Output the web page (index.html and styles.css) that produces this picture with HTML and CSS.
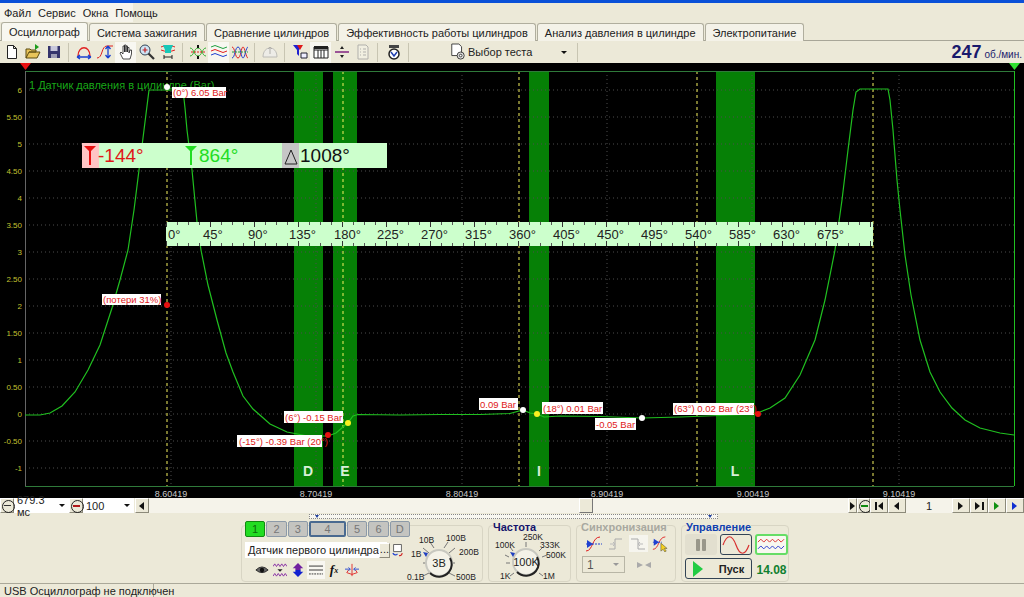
FILE: index.html
```html
<!DOCTYPE html>
<html lang="ru">

<head>
  <meta charset="UTF-8" />
  <title>Осциллограф</title>
  <link rel="stylesheet" href="styles.css">
</head>

<body>
  <div class="titlebar"></div>

  <div class="menubar">
    <ul class="menu">
      <li>Файл</li>
      <li>Сервис</li>
      <li>Окна</li>
      <li>Помощь</li>
    </ul>
  </div>

  <ul class="tabs">
    <li class="tab active">Осциллограф</li>
    <li class="tab">Система зажигания</li>
    <li class="tab">Сравнение цилиндров</li>
    <li class="tab">Эффективность работы цилиндров</li>
    <li class="tab">Анализ давления в цилиндре</li>
    <li class="tab">Электропитание</li>
  </ul>

  <div class="toolbar">
    <span class="tool"><svg viewBox="0 0 16 16"><path d="M3.500 1.500h6l3 3v10h-9z M9.500 1.500v3h3" fill="#fff" stroke="#222"/></svg></span>
    <span class="tool"><svg viewBox="0 0 16 16"><path d="M1 14V5h4l1 1h5v2H4L1 14h11l3-6H4" fill="#e8c45a" stroke="#5a4a10"/><path d="M10 0v6l4-3z" fill="#1c9c1c"/></svg></span>
    <span class="tool"><svg viewBox="0 0 16 16"><path d="M2 2h12v12H2z" fill="#34346c"/><path d="M4.500 2h7v5h-7z" fill="#c8c8dc"/><path d="M5 10h6v4H5z" fill="#9c9cb4"/></svg></span>
    <i class="sep"></i>
    <span class="tool"><svg viewBox="0 0 16 16"><path d="M2 12C2 1 14 1 14 12" fill="none" stroke="#e02020" stroke-width="1.300"/><path d="M1 13h14M1 13l3-2M1 13l3 2M15 13l-3-2M15 13l-3 2" fill="none" stroke="#1840d0" stroke-width="1.300"/></svg></span>
    <span class="tool"><svg viewBox="0 0 16 16"><path d="M0 14C6 14 4 2 10 2h6" fill="none" stroke="#e02020"/><path d="M11 2v12M11 2L8.500 5M11 2l2.500 3M11 14l-2.500-3M11 14l2.500-3" fill="none" stroke="#1840d0" stroke-width="1.300"/></svg></span>
    <span class="tool pressed"><svg viewBox="0 0 16 16"><path d="M5 15L2 9l1-1 2 2V2h1.500v6V1H8v7V2h1.500v6V3.500H11V9l1-3h1.500v4L12 15z" fill="#fff" stroke="#222" stroke-width=".8"/></svg></span>
    <span class="tool"><svg viewBox="0 0 16 16"><circle cx="6" cy="6" r="5" fill="#cfe4f4" stroke="#345"/><path d="M6 3.500v5M3.500 6h5" stroke="#c02020" stroke-width="1.200"/><path d="M9.500 9.500L15 15" stroke="#333" stroke-width="2.200"/></svg></span>
    <span class="tool"><svg viewBox="0 0 16 16"><path d="M1 3c5-2 9-2 14 0M1 6c5 2 9 2 14 0" fill="none" stroke="#e02020"/><path d="M3 1h10l-2 5v3H5V6z" fill="#18c8b8"/><path d="M4 11v4M12 11v4M4 13h8" stroke="#222"/></svg></span>
    <i class="sep"></i>
    <span class="tool"><svg viewBox="0 0 16 16"><path d="M0 4c4 0 4 8 8 8s4-8 8-8M0 12c4 0 4-8 8-8s4 8 8 8" fill="none" stroke="#30b030"/><path d="M8 1v3M8 12v3" stroke="#111" stroke-width="2"/><path d="M1 8h14" stroke="#e02020" stroke-dasharray="2 1"/></svg></span>
    <span class="tool pressed"><svg viewBox="0 0 16 16"><path d="M0 3q4-3 8 0t8 0" fill="none" stroke="#20a040"/><path d="M0 7q4-3 8 0t8 0" fill="none" stroke="#e02020"/><path d="M0 11q4-3 8 0t8 0" fill="none" stroke="#2040d0"/></svg></span>
    <span class="tool"><svg viewBox="0 0 16 16"><path d="M0 3c3 0 3 11 6 11s3-11 5-11 3 11 5 11" fill="none" stroke="#e02020"/><path d="M0 14c3 0 3-11 6-11s3 11 5 11 3-11 5-11" fill="none" stroke="#2040d0"/><path d="M0 8h16" stroke="#20a040" stroke-dasharray="2 1"/></svg></span>
    <i class="sep"></i>
    <span class="tool off"><svg viewBox="0 0 16 16"><path d="M1 13C1 1 15 1 15 13z" fill="#eee" stroke="#aaa"/><path d="M8 3v7M6 5l2-2 2 2" fill="none" stroke="#999"/></svg></span>
    <i class="sep"></i>
    <span class="tool"><svg viewBox="0 0 16 16"><path d="M1 1h9L7 6v6L5 10V6z" fill="#2020d0"/><path d="M5 1h6L8 6z" fill="#e01818"/><path d="M9 9h6v5H9z" fill="#eef" stroke="#223"/></svg></span>
    <span class="tool pressed"><svg viewBox="0 0 16 16"><path d="M1 3h14v11H1z M1 6h14M5 6v8M8 6v8M11 6v8" fill="#fff" stroke="#222"/><path d="M1 2h14v3H1z" fill="#222"/></svg></span>
    <span class="tool"><svg viewBox="0 0 16 16"><path d="M1 8h14" stroke="#802080" stroke-width="1.500"/><path d="M8 2l-2 3h4zM8 14l-2-3h4z" fill="#222"/></svg></span>
    <span class="tool off"><svg viewBox="0 0 16 16"><path d="M3 1h8l2 2v12H3z M5 5h1M8 5h3M5 8h1M8 8h3M5 11h1M8 11h3" fill="#f4f2e6" stroke="#999"/></svg></span>
    <i class="sep wide"></i>
    <span class="tool"><svg viewBox="0 0 16 16"><path d="M3 4h10v-3H3z" fill="#444"/><circle cx="8" cy="10" r="5" fill="#fff" stroke="#222" stroke-width="1.500"/><path d="M5 8l3 4 3-4" fill="none" stroke="#2040b0" stroke-width="1.500"/></svg></span>
    <i class="sep"></i>
    <div class="test-select">
      <svg viewBox="0 0 18 20"><path d="M2 1h8l3 3v10H2z" fill="#fff" stroke="#333"/><circle cx="12" cy="14" r="4" fill="#ddd" stroke="#333"/><circle cx="12" cy="14" r="1.500" fill="#fff" stroke="#333"/></svg>
      <span>Выбор теста</span>
      <b class="down"></b>
    </div>
    <i class="sep"></i>
    <div class="rpm"><b>247</b> об./мин.</div>
  </div>

  <svg class="plot" viewBox="0 63 1024 435">
    <path class="band" d="M294 71h29v415h-29z M333 71h24v415h-24z M529 71h20v415h-20z M716 71h39v415h-39z" />

    <path class="grid" d="M25 90H1014M25 117H1014M25 144H1014M25 171H1014M25 198H1014M25 225H1014M25 252H1014M25 279H1014M25 306H1014M25 333H1014M25 360H1014M25 387H1014M25 414H1014M25 441H1014M25 468H1014" />
    <path class="grid" d="M171 71V486M316 71V486M462 71V486M607 71V486M752 71V486M899 71V486" />
    <path class="cursor" d="M167 71V486M343 71V486M519 71V486M697 71V486M873 71V486" />

    <path class="frame" d="M25 71.500H1014M25 486.500H1014" />
    <path class="left-axis" d="M25.500 71V486" />
    <path class="right-axis" d="M1014.500 71V486" />
    <path class="marker-red" d="M20 63h11l-5.500 7z" />
    <path class="marker-green" d="M1009 63h11l-5.500 7z" />

    <g class="ylabels">
      <text x="22" y="93">6</text>
      <text x="22" y="120">5.50</text>
      <text x="22" y="147">5</text>
      <text x="22" y="174">4.50</text>
      <text x="22" y="201">4</text>
      <text x="22" y="228">3.50</text>
      <text x="22" y="255">3</text>
      <text x="22" y="282">2.50</text>
      <text x="22" y="309">2</text>
      <text x="22" y="336">1.50</text>
      <text x="22" y="363">1</text>
      <text x="22" y="390">0.50</text>
      <text x="22" y="417">0</text>
      <text x="22" y="444">-0.50</text>
      <text x="22" y="471">-1</text>
    </g>
    <g class="xlabels">
      <text x="171" y="497">8.60419</text>
      <text x="316" y="497">8.70419</text>
      <text x="462" y="497">8.80419</text>
      <text x="607" y="497">8.90419</text>
      <text x="753" y="497">9.00419</text>
      <text x="899" y="497">9.10419</text>
    </g>

    <text class="channel" x="29" y="89">1 Датчик давления в цилиндре (Bar)</text>

    <polyline class="curve" points="25,415 40,415 50,413 62,406 75,392 88,370 100,345 112,308 120,280 128,250 134,210 139,170 144,130 149,90 183,90 185,108 187,130 192,170 197,222 201,250 208,285 217,320 226,353 233,372 243,396 253,409 270,424 287,432 305,435.500 320,436 328,436 336,433 343,427 350,420 353,416 358,414.500 400,415 440,414.500 480,414.500 510,413.500 523,410 530,413 537,414 544,417 560,416 600,416.500 642,418 680,417 720,415.500 755,414 770,408 785,398 800,375 815,340 825,300 835,250 842,200 848,150 853,110 856,92 860,89 888,89 890,100 893,130 897,180 900,210 905,255 911,295 920,340 930,372 940,392 952,408 965,420 980,428 1000,433 1014,435" />

    <g class="letters">
      <text x="308" y="476">D</text>
      <text x="345" y="476">E</text>
      <text x="539" y="476">I</text>
      <text x="735" y="476">L</text>
    </g>

    <g class="info">
      <rect x="82" y="143" width="305" height="25" class="info-bg" />
      <rect x="82" y="143" width="17" height="25" class="info-red" />
      <rect x="282" y="143" width="17" height="25" class="info-grey" />
      <path class="marker-red" d="M84 146h12l-5 5v14h-2v-14z" />
      <path class="marker-bright" d="M185 146h12l-5 5v14h-2v-14z" />
      <path class="delta" d="M291 150l-6 14h12z" />
      <text class="big red" x="98" y="162">-144°</text>
      <text class="big bright" x="199" y="162">864°</text>
      <text class="big dark" x="300" y="162">1008°</text>
    </g>

    <g class="ruler">
      <rect x="166" y="222" width="707" height="24" class="info-bg" />
      <path class="minor" d="M166 223.500H873M166 244.500H873" />
      <path class="major" d="M166 224.500H873M166 243.500H873" />
      <text x="168" y="239">0°</text>
      <text x="203" y="239">45°</text>
      <text x="248" y="239">90°</text>
      <text x="289" y="239">135°</text>
      <text x="334" y="239">180°</text>
      <text x="377" y="239">225°</text>
      <text x="421" y="239">270°</text>
      <text x="465" y="239">315°</text>
      <text x="509" y="239">360°</text>
      <text x="553" y="239">405°</text>
      <text x="597" y="239">450°</text>
      <text x="641" y="239">495°</text>
      <text x="685" y="239">540°</text>
      <text x="729" y="239">585°</text>
      <text x="773" y="239">630°</text>
      <text x="817" y="239">675°</text>
    </g>

    <g class="tags">
      <rect x="172" y="87" width="54" height="11" />
      <text x="173" y="96">(0°) 6.05 Bar</text>
      <rect x="102" y="294" width="59" height="11" />
      <text x="103" y="303">(потери 31%)</text>
      <rect x="284" y="411" width="59" height="12" />
      <text x="285" y="421">(6°) -0.15 Bar</text>
      <rect x="237" y="435" width="85" height="12" />
      <text x="239" y="445">(-15°) -0.39 Bar (20°)</text>
      <rect x="479" y="398" width="39" height="12" />
      <text x="480" y="408">0.09 Bar</text>
      <rect x="542" y="402" width="61" height="12" />
      <text x="543" y="412">(18°) 0.01 Bar</text>
      <rect x="595" y="418" width="41" height="12" />
      <text x="596" y="428">-0.05 Bar</text>
      <rect x="673" y="403" width="81" height="12" />
      <text x="674" y="412">(63°) 0.02 Bar (23°)</text>
    </g>

    <circle class="dot white" cx="167" cy="87" r="3" />
    <circle class="dot red-dot" cx="167" cy="305" r="3" />
    <circle class="dot yellow" cx="348" cy="423" r="3" />
    <circle class="dot red-dot" cx="328" cy="435" r="3" />
    <circle class="dot white" cx="523" cy="410" r="3" />
    <circle class="dot yellow" cx="537" cy="414" r="3" />
    <circle class="dot white" cx="642" cy="418" r="3" />
    <circle class="dot red-dot" cx="758" cy="414" r="3" />
  </svg>

  <div class="navrow">
    <button class="nav-btn round minus"></button>
    <div class="field time">679.3 мс<b class="down"></b></div>
    <button class="nav-btn round plus"></button>
    <div class="field scale">100<b class="down"></b></div>
    <button class="nav-btn arrow-l"></button>
    <div class="track"><span class="thumb"></span></div>
    <button class="nav-btn small arrow-r"></button>
    <button class="nav-btn round plus green-plus"></button>
    <button class="nav-btn step first"></button>
    <button class="nav-btn step arrow-l"></button>
    <span class="page">1</span>
    <button class="nav-btn step arrow-r"></button>
    <button class="nav-btn step last"></button>
    <button class="nav-btn step arrow-r play-green"></button>
    <button class="nav-btn step arrow-r play-blue"></button>
  </div>

  <div class="splitter">
    <div class="split-bar"><b></b><b></b></div>
  </div>

  <div class="panels">
    <section class="panel channels">
      <div class="channel-col">
        <div class="chan-tabs">
          <span class="chan on">1</span>
          <span class="chan">2</span>
          <span class="chan">3</span>
          <span class="chan sel">4</span>
          <span class="chan">5</span>
          <span class="chan">6</span>
          <span class="chan">D</span>
        </div>
        <div class="sensor-row">
          <div class="sensor">Датчик первого цилиндра<span class="dots">...</span></div>
          <svg class="sensor-ico" viewBox="0 0 14 16"><path d="M2 1h10v9H2z" fill="#fff" stroke="#444"/><path d="M1 12q3 4 6 1" fill="none" stroke="#2040d0" stroke-width="1.500"/><path d="M13 12q-1 4-4 3" fill="none" stroke="#d02020" stroke-width="1.500"/></svg>
        </div>
        <div class="chan-tools">
          <span class="ctool"><svg viewBox="0 0 16 16"><path d="M1 8q7-7 14 0q-7 6-14 0" fill="#666" stroke="#222"/><circle cx="8" cy="8" r="2.500" fill="#111"/></svg></span>
          <span class="ctool"><svg viewBox="0 0 16 16"><path d="M0 4l2-3 2 3 2-3 2 3 2-3 2 3 2-3 2 3M0 15l2-3 2 3 2-3 2 3 2-3 2 3 2-3 2 3" fill="none" stroke="#8020a0"/><path d="M5 7h6l-3 3z" fill="#222"/></svg></span>
          <span class="ctool"><svg viewBox="0 0 16 16"><path d="M8 0l6 6h-3v2H5V6H2z" fill="#7020a0"/><path d="M8 16l6-6h-3V8H5v2H2z" fill="#1020d0"/></svg></span>
          <span class="ctool pressed"><svg viewBox="0 0 16 16"><path d="M0 3.500h16M0 8h16" stroke="#222"/><path d="M0 12.500h16" stroke="#222" stroke-dasharray="2 1"/></svg></span>
          <span class="ctool fx">f<small>x</small></span>
          <span class="ctool"><svg viewBox="0 0 16 16"><path d="M8 1v14" stroke="#e02020"/><path d="M8 13l-6-2 2-3M8 13l6-2-2-3" fill="none" stroke="#e02020"/><path d="M0 7h6M4 5l2 2-2 2M16 7h-6M12 5l-2 2 2 2" fill="none" stroke="#2040d0"/></svg></span>
        </div>
      </div>
      <svg class="knob" viewBox="410 525 73 57">
        <path class="knob-ticks" d="M433 552l-6-5M438 547l-4-6M448 547l4-6M453 552l6-5M454 562h5M453 572l6 3M433 572l-6 3M431 562h-4" />
        <circle class="knob-face" cx="443" cy="562" r="13" />
        <path class="knob-rim" d="M434 572a13 13 0 0 0 19-1 13 13 0 0 0 1-14" />
        <path class="knob-point" d="M432 552l-5-1 3 5z" />
        <text class="knob-value" x="443" y="566">3В</text>
        <text x="423" y="542">10В</text>
        <text x="450" y="540">100В</text>
        <text x="463" y="554">200В</text>
        <text x="415" y="556">1В</text>
        <text x="411" y="579">0.1В</text>
        <text x="460" y="579">500В</text>
      </svg>
    </section>

    <section class="panel freq">
      <h3 class="panel-title navy">Частота</h3>
      <svg class="knob" viewBox="489 525 80 57">
        <path class="knob-ticks" d="M513 550l-3-4M526 546v-5M539 550l4-4M542 556l5-2M514 572l-4 3M539 572l4 3M510 562h-4M509 556l-4-2" />
        <circle class="knob-face" cx="526" cy="561" r="13" />
        <path class="knob-rim" d="M517 571a13 13 0 0 0 19-1 13 13 0 0 0 1-14" />
        <path class="knob-point" d="M515 552l-5-1 3 5z" />
        <text class="knob-value" x="526" y="565">100K</text>
        <text x="523" y="539">250K</text>
        <text x="495" y="547">100K</text>
        <text x="540" y="547">333K</text>
        <text x="546" y="557">500K</text>
        <text x="500" y="578">1K</text>
        <text x="543" y="578">1M</text>
      </svg>
    </section>

    <section class="panel sync">
      <h3 class="panel-title grey">Синхронизация</h3>
      <div class="sync-icons">
        <span class="stool"><svg viewBox="0 0 18 16"><path d="M1 15c7 0 6-14 14-14" fill="none" stroke="#e02020"/><path d="M1 8h16" stroke="#2040d0" stroke-dasharray="2 1"/><path d="M2 4v8l6-4z" fill="#2040d0"/></svg></span>
        <span class="stool"><svg viewBox="0 0 18 16"><path d="M2 13h6V3h7" fill="none" stroke="#aaa"/><path d="M3 8h5M6 6l2 2-2 2" fill="none" stroke="#bbb"/></svg></span>
        <span class="stool pale"><svg viewBox="0 0 18 16"><path d="M2 3h7v10h7" fill="none" stroke="#aaa"/><path d="M9 8h5M11 6L9 8l2 2" fill="none" stroke="#bbb"/></svg></span>
        <span class="stool"><svg viewBox="0 0 18 18"><path d="M1 15C8 15 7 1 15 1" fill="none" stroke="#e02020"/><path d="M1 7h10" stroke="#2040d0" stroke-dasharray="2 1"/><path d="M2 3v8l6-4z" fill="#2040d0"/><path d="M10 8v9l2.500-2 2 3 1.500-1-2-3h3z" fill="#f4d020" stroke="#333" stroke-width=".5"/></svg></span>
      </div>
      <div class="sync-row">
        <div class="sync-select">1<b class="down pale-down"></b></div>
        <svg class="sync-arrows" viewBox="0 0 16 8"><path d="M1 1l6 3-6 3zM15 1L9 4l6 3z" fill="#aaa"/></svg>
      </div>
    </section>

    <section class="panel control">
      <h3 class="panel-title blue">Управление</h3>
      <div class="control-grid">
        <span class="cbtn pause"><i></i><i></i></span>
        <span class="cbtn dark"><svg viewBox="0 0 30 18"><path d="M2 9c4-11 9-11 13 0s9 11 13 0" fill="none" stroke="#d83030" stroke-width="1.200"/></svg></span>
        <span class="cbtn greenline"><svg viewBox="0 0 30 18"><path d="M1 6l3-3 3 3 3-3 3 3 3-3 3 3 3-3 3 3 3-3" fill="none" stroke="#d83030"/><path d="M1 13l3-3 3 3 3-3 3 3 3-3 3 3 3-3 3 3 3-3" fill="none" stroke="#3040d0"/></svg></span>
        <span class="cbtn start"><i class="play"></i>Пуск</span>
        <span class="elapsed">14.08</span>
      </div>
    </section>
  </div>

  <div class="statusbar">
    <span class="status-main">USB Осциллограф не подключен</span>
  </div>
</body>

</html>
```

FILE: styles.css
```css
* {
  box-sizing: border-box;
}

html,
body {
  margin: 0;
  height: 597px;
  overflow: hidden;
}

body {
  background: #ece9d8;
  color: #222;
  font-family: "Liberation Sans", "Noto Sans", sans-serif;
  font-size: 11px;
}

ul {
  margin: 0;
  padding: 0;
  list-style: none;
}

svg {
  display: block;
}

.titlebar {
  height: 3px;
  background: #0a50d8;
}

/* menu */
.menubar {
  height: 19px;
}

.menu {
  display: flex;
  width: 133px;
  height: 100%;
  align-items: center;
  gap: 7px;
  padding-left: 4px;
  background: #f6f4ec;
}

/* tabs */
.tabs {
  display: flex;
  height: 19px;
  gap: 1px;
  padding-left: 1px;
  border-bottom: 1px solid #a8a698;
}

.tab {
  display: flex;
  align-items: center;
  justify-content: center;
  height: 18px;
  margin-top: 1px;
  padding: 0 7px;
  border: 1px solid #b0ae9e;
  border-bottom: none;
  border-radius: 3px 3px 0 0;
  background: #f4f2e8;
  white-space: nowrap;
}

.tab.active {
  height: 19px;
  margin-top: 0;
  background: #f8f7f0;
}

/* toolbar */
.toolbar {
  display: flex;
  height: 22px;
  align-items: center;
  padding-left: 1px;
}

.tool {
  display: flex;
  width: 21px;
  height: 21px;
  align-items: center;
  justify-content: center;
}

.tool svg {
  width: 16px;
  height: 16px;
}

.tool.pressed {
  background: #f8f7f1;
}

.tool.off {
  opacity: 0.7;
}

.sep {
  display: block;
  width: 1px;
  height: 19px;
  margin: 0 4px;
  background: #c8c5b2;
}

.sep.wide {
  margin: 0 5px 0 4px;
}

.test-select {
  display: flex;
  width: 160px;
  align-items: center;
  padding-left: 37px;
  gap: 2px;
}

.test-select svg {
  width: 16px;
  height: 18px;
}

.test-select .down {
  margin-left: auto;
  margin-right: 6px;
}

.down {
  display: block;
  width: 0;
  height: 0;
  border: 3px solid transparent;
  border-top: 3px solid #111;
  border-bottom: none;
}

.rpm {
  margin-left: auto;
  padding-right: 2px;
  color: #1a1a6c;
  white-space: nowrap;
  font-size: 10px;
}

.rpm b {
  font-size: 18px;
}

/* plot */
.plot {
  width: 1024px;
  height: 435px;
  background: #000;
}

.band {
  fill: #068006;
}

.grid {
  fill: none;
  stroke: #4c4c4c;
  stroke-dasharray: 1 3;
}

.cursor {
  fill: none;
  stroke: #f4f060;
  stroke-dasharray: 3 3;
}

.frame {
  stroke: #2f7a3a;
}

.left-axis {
  stroke: #666;
}

.right-axis {
  stroke: #20c020;
}

.marker-red {
  fill: #e81010;
}

.marker-green {
  fill: #30e030;
}

.marker-bright {
  fill: #22dd22;
}

.ylabels text {
  fill: #c4c030;
  font-size: 8px;
  text-anchor: end;
}

.xlabels text {
  fill: #c8c8c8;
  font-size: 9px;
  text-anchor: middle;
}

.channel {
  fill: #18a818;
  font-size: 11px;
}

.curve {
  fill: none;
  stroke: #20c020;
  stroke-width: 1.200;
}

.letters text {
  fill: #d8efd8;
  font-size: 14px;
  font-weight: bold;
  text-anchor: middle;
}

.info-bg {
  fill: #ccffcc;
}

.info-red {
  fill: #ffc4c4;
}

.info-grey {
  fill: #c6c6c6;
}

.delta {
  fill: none;
  stroke: #222;
}

.big {
  font-size: 19px;
}

.big.red {
  fill: #e01818;
}

.big.bright {
  fill: #22dd22;
}

.big.dark {
  fill: #111;
}

.ruler text {
  fill: #222;
  font-size: 13px;
}

.minor {
  fill: none;
  stroke: #555;
  stroke-width: 3;
  stroke-dasharray: 1 10;
}

.major {
  fill: none;
  stroke: #333;
  stroke-width: 5;
  stroke-dasharray: 1 43;
}

.tags rect {
  fill: #fff;
}

.tags text {
  fill: #e01818;
  font-size: 9.500px;
}

.dot {
  stroke: none;
}

.dot.white {
  fill: #fff;
}

.dot.red-dot {
  fill: #e81010;
}

.dot.yellow {
  fill: #f8f020;
}

/* row under the plot */
.navrow {
  display: flex;
  height: 16px;
  align-items: stretch;
}

.nav-btn {
  position: relative;
  width: 14px;
  height: 15px;
  padding: 0;
  appearance: none;
  border: 1px solid;
  border-color: #fff #8c8a7a #8c8a7a #fff;
  background: #ece9d8;
}

.nav-btn.step {
  width: 18px;
}

.nav-btn.small {
  width: 9px;
}

.nav-btn::before {
  content: "";
  position: absolute;
  top: 3px;
  left: 50%;
  margin-left: -3px;
  border: 4px solid transparent;
  border-left: none;
}

.arrow-l::before {
  border-right: 5px solid #111;
}

.arrow-r::before {
  border-right: none;
  border-left: 5px solid #111;
  border-top-width: 4px;
  border-bottom-width: 4px;
}

.play-green::before {
  border-left-color: #109010;
}

.play-blue::before {
  border-left-color: #1030d0;
}

.first::before {
  border-right: 5px solid #111;
  margin-left: -1px;
}

.first::after,
.last::after {
  content: "";
  position: absolute;
  top: 3px;
  left: 4px;
  width: 2px;
  height: 8px;
  background: #111;
}

.last::before {
  border-right: none;
  border-left: 5px solid #111;
  margin-left: -4px;
}

.last::after {
  left: 11px;
}

.round::before {
  top: 1px;
  left: 1px;
  width: 11px;
  height: 11px;
  margin: 0;
  border: 1px solid #222;
  border-radius: 50%;
}

.round::after {
  content: "";
  position: absolute;
  top: 6px;
  left: 3px;
  width: 7px;
  height: 1px;
  background: #333;
}

.plus::after {
  box-shadow: none;
  background: #b01818;
  height: 1.500px;
}

.green-plus {
  width: 13px;
}

.green-plus::after {
  background: #108a10;
}

.field {
  display: flex;
  align-items: center;
  height: 15px;
  padding-left: 3px;
  padding-right: 4px;
  background: #fff;
  font-size: 11px;
}

.field .down {
  margin-left: auto;
}

.time {
  width: 55px;
}

.scale {
  width: 51px;
  margin-right: 1px;
}

.track {
  flex: 1;
  height: 15px;
  padding-left: 430px;
  background: #f5f3ea;
}

.thumb {
  display: block;
  width: 14px;
  height: 15px;
  background: #ece9d8;
  border: 1px solid;
  border-color: #fff #777 #777 #fff;
}

.page {
  display: flex;
  width: 46px;
  align-items: center;
  justify-content: center;
  background: #f5f3ea;
  height: 15px;
}

/* thin scroll above the panels */
.splitter {
  display: flex;
  height: 6px;
  padding-left: 309px;
}

.split-bar {
  display: flex;
  justify-content: space-between;
  width: 409px;
  height: 5px;
  padding: 0 5px;
  border: 1px dotted #888;
  background: #f8f7f1;
}

.split-bar b {
  width: 0;
  height: 0;
  border: 2px solid transparent;
  border-top: 3px solid #2040a0;
  border-bottom: none;
}

/* control panels */
.panels {
  display: flex;
  height: 64px;
  padding: 5px 0 2px 241px;
  gap: 5px;
  border-bottom: 1px solid #aaa899;
}

.panel {
  position: relative;
  height: 57px;
  border: 1px solid #d8d5c4;
  border-radius: 4px;
}

.panel-title {
  position: absolute;
  top: -5px;
  left: 4px;
  margin: 0;
  font-size: 11px;
  font-weight: bold;
  line-height: 13px;
  background: #ece9d8;
  white-space: nowrap;
}

.panel-title.navy {
  color: #14146c;
}

.panel-title.grey {
  color: #a8a8a0;
}

.panel-title.blue {
  color: #1040b0;
}

.channels {
  display: flex;
  width: 242px;
}

.channel-col {
  width: 168px;
  padding-left: 3px;
}

.chan-tabs {
  display: flex;
  gap: 1px;
  margin-top: -5px;
}

.chan {
  display: flex;
  width: 21px;
  height: 16px;
  align-items: center;
  justify-content: center;
  background: #c4c4c0;
  border: 1px solid #8c9aa8;
  border-radius: 2px;
  color: #777;
}

.chan.on {
  background: #22dd22;
  border-color: #108a10;
  color: #0a6a0a;
}

.chan.sel {
  width: 38px;
  border: 2px solid #4a6a90;
}

.sensor-row {
  display: flex;
  align-items: center;
  margin-top: 5px;
  gap: 5px;
}

.sensor {
  display: flex;
  width: 142px;
  height: 16px;
  align-items: center;
  padding-left: 3px;
  background: #fff;
  white-space: nowrap;
}

.dots {
  display: flex;
  width: 14px;
  height: 15px;
  margin-left: auto;
  justify-content: center;
  background: #ece9d8;
  border: 1px solid;
  border-color: #fff #8c8a7a #8c8a7a #fff;
  line-height: 10px;
}

.sensor-ico {
  width: 11px;
  height: 14px;
}

.chan-tools {
  display: flex;
  margin-top: 3px;
  padding-left: 8px;
  align-items: center;
}

.ctool {
  display: flex;
  width: 18px;
  height: 18px;
  align-items: center;
  justify-content: center;
}

.ctool svg {
  width: 14px;
  height: 14px;
}

.ctool.pressed {
  background: #f8f7f1;
}

.ctool.fx {
  color: #111;
  font-family: "Liberation Serif", serif;
  font-size: 13px;
  font-style: italic;
  font-weight: bold;
}

.ctool.fx small {
  font-size: 8px;
}

.knob {
  flex: none;
  width: 73px;
  height: 57px;
  margin-left: -4px;
  overflow: visible;
}

.knob text {
  fill: #222;
  font-size: 8.500px;
}

.knob .knob-value {
  font-size: 11px;
  text-anchor: middle;
}

.knob-ticks {
  fill: none;
  stroke: #777;
}

.knob-face {
  fill: #f4f2e8;
  stroke: #c8c8c0;
  stroke-width: 2;
}

.knob-rim {
  fill: none;
  stroke: #222;
  stroke-width: 2;
}

.knob-point {
  fill: #2040c0;
}

.freq {
  width: 83px;
}

.freq .knob {
  width: 80px;
  margin-left: 0;
}

.sync {
  width: 100px;
  padding: 9px 5px 0;
}

.sync-icons {
  display: flex;
  gap: 3px;
  padding-left: 2px;
}

.stool {
  display: flex;
  width: 20px;
  height: 17px;
  align-items: center;
  justify-content: center;
}

.stool svg {
  width: 18px;
  height: 16px;
}

.stool.pale {
  background: #f6f5ee;
}

.sync-row {
  display: flex;
  align-items: center;
  gap: 11px;
  margin-top: 4px;
}

.sync-select {
  display: flex;
  width: 43px;
  height: 17px;
  align-items: center;
  padding: 0 5px 0 4px;
  border: 1px solid #b8b6a6;
  color: #555;
  font-size: 12px;
}

.pale-down {
  margin-left: auto;
  border-top-color: #999;
}

.sync-arrows {
  width: 16px;
  height: 8px;
}

.control {
  width: 108px;
  padding: 8px 3px 0;
}

.control-grid {
  display: grid;
  grid-template-columns: 32px 32px 33px;
  grid-template-rows: 21px 21px;
  gap: 3px;
}

.cbtn {
  display: flex;
  align-items: center;
  justify-content: center;
  border-radius: 3px;
  background: #ece9d8;
}

.cbtn svg {
  width: 30px;
  height: 18px;
}

.pause {
  gap: 2px;
  background: #e2dfcf;
}

.pause i {
  display: block;
  width: 4px;
  height: 12px;
  background: #99978a;
  border-radius: 1px;
}

.dark {
  border: 1px solid #334455;
}

.greenline {
  border: 2px solid #66dd66;
  background: #f8f8f0;
}

.start {
  grid-column: 1 / 3;
  gap: 16px;
  border: 1px solid #334455;
  font-weight: bold;
}

.play {
  display: block;
  width: 0;
  height: 0;
  border: 8px solid transparent;
  border-left: 10px solid #22cc44;
  border-right: none;
}

.elapsed {
  align-self: center;
  padding-top: 2px;
  text-align: center;
  color: #108030;
  font-size: 12px;
  font-weight: bold;
}

/* status bar */
.statusbar {
  height: 13px;
  background: #ece9d8;
}

.status-main {
  display: block;
  width: 154px;
  height: 13px;
  padding-left: 4px;
  border-right: 1px solid #aaa899;
  line-height: 14px;
  white-space: nowrap;
}
```
